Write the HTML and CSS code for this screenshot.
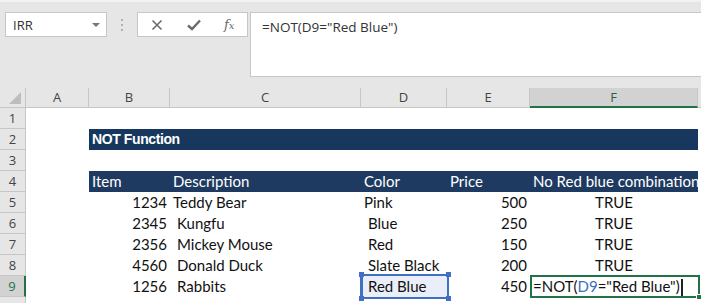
FILE: index.html
```html
<!DOCTYPE html>
<html>
<head>
<meta charset="utf-8">
<link rel="stylesheet" href="styles.css">
</head>
<body>
<div class="app">
  <div class="toolbar">
    <div class="namebox"><span class="name">IRR</span><span class="caret"></span></div>
    <div class="grip"><i></i><i></i><i></i></div>
    <div class="fxbox">
      <svg class="ico" width="12" height="12" viewBox="0 0 12 12"><path d="M1.5 1.5 L10.5 10.5 M10.5 1.5 L1.5 10.5" stroke="#6b6b6b" stroke-width="1.6" fill="none"/></svg>
      <svg class="ico" width="14" height="12" viewBox="0 0 14 12"><path d="M1 6.5 L5 10 L13 1.5" stroke="#6b6b6b" stroke-width="2.4" fill="none"/></svg>
      <span class="fx">f<span class="fxx">x</span></span>
    </div>
    <div class="formula">=NOT(D9="Red Blue")</div>
  </div>

  <div class="sheet">
    <div class="corner"><span class="tri"></span></div>
    <div class="ch">A</div>
    <div class="ch">B</div>
    <div class="ch">C</div>
    <div class="ch">D</div>
    <div class="ch">E</div>
    <div class="ch ch-sel">F</div>
    <div class="ch ch-end"></div>

    <div class="rh">1</div>
    <div class="c"></div><div class="c"></div><div class="c"></div><div class="c"></div><div class="c"></div><div class="c"></div><div class="c"></div>

    <div class="rh">2</div>
    <div class="c"></div>
    <div class="c band title">NOT Function</div>
    <div class="c"></div>

    <div class="rh">3</div>
    <div class="c"></div><div class="c"></div><div class="c"></div><div class="c"></div><div class="c"></div><div class="c"></div><div class="c"></div>

    <div class="rh">4</div>
    <div class="c"></div>
    <div class="c band2">Item</div>
    <div class="c band2">Description</div>
    <div class="c band2">Color</div>
    <div class="c band2">Price</div>
    <div class="c band2">No Red blue combination</div>
    <div class="c"></div>

    <div class="rh">5</div>
    <div class="c"></div>
    <div class="c num">1234</div>
    <div class="c">Teddy Bear</div>
    <div class="c">Pink</div>
    <div class="c num">500</div>
    <div class="c mid">TRUE</div>
    <div class="c"></div>

    <div class="rh">6</div>
    <div class="c"></div>
    <div class="c num">2345</div>
    <div class="c sp">Kungfu</div>
    <div class="c sp">Blue</div>
    <div class="c num">250</div>
    <div class="c mid">TRUE</div>
    <div class="c"></div>

    <div class="rh">7</div>
    <div class="c"></div>
    <div class="c num">2356</div>
    <div class="c sp">Mickey Mouse</div>
    <div class="c sp">Red</div>
    <div class="c num">150</div>
    <div class="c mid">TRUE</div>
    <div class="c"></div>

    <div class="rh">8</div>
    <div class="c"></div>
    <div class="c num">4560</div>
    <div class="c sp">Donald Duck</div>
    <div class="c sp">Slate Black</div>
    <div class="c num">200</div>
    <div class="c mid">TRUE</div>
    <div class="c"></div>

    <div class="rh rh-sel">9</div>
    <div class="c"></div>
    <div class="c num">1256</div>
    <div class="c sp">Rabbits</div>
    <div class="c sp refcell">
      <span class="refbox"><i class="h h1"></i><i class="h h2"></i><i class="h h3"></i><i class="h h4"></i></span>
      <span class="reftext">Red Blue</span>
    </div>
    <div class="c num">450</div>
    <div class="c edit">
      <span class="editbox"><i class="fill"></i></span>
      <span class="etext">=NOT(<span class="refc">D9</span>="Red Blue")<i class="caretline"></i></span>
    </div>
    <div class="c"></div>

    <div class="rh"></div>
    <div class="c"></div><div class="c"></div><div class="c"></div><div class="c"></div><div class="c"></div><div class="c"></div><div class="c"></div>
  </div>
</div>
</body>
</html>
```

FILE: styles.css
```css
* { box-sizing: border-box; }
html, body { margin: 0; padding: 0; }
body {
  width: 701px;
  height: 303px;
  overflow: hidden;
  background: #e6e6e6;
  font-family: "Lato", "Open Sans", sans-serif;
}
.app { display: flex; flex-direction: column; }

.toolbar {
  display: flex;
  align-items: flex-start;
  padding: 12px 0 0 5px;
  height: 88px;
  border-top: 2px solid #f2f2f2;
  padding-top: 10px;
}
.namebox {
  width: 102px;
  height: 25px;
  background: #fff;
  border: 1px solid #c6c6c6;
  display: flex;
  align-items: center;
  justify-content: space-between;
  padding: 0 6px 0 7px;
}
.name { font-family: "Open Sans", sans-serif; font-size: 13px; color: #333; }
.caret {
  width: 0; height: 0;
  border-left: 4px solid transparent;
  border-right: 4px solid transparent;
  border-top: 4px solid #777;
}
.grip {
  width: 30px;
  height: 25px;
  display: flex;
  flex-direction: column;
  align-items: center;
  justify-content: center;
  gap: 3px;
}
.grip i { display: block; width: 2px; height: 2px; background: #b0b0b0; }
.fxbox {
  width: 111px;
  height: 25px;
  background: #fff;
  border: 1px solid #c6c6c6;
  margin-right: 2px;
  display: flex;
  align-items: center;
  padding-left: 13px;
  gap: 24px;
}
.fxbox .ico:nth-child(2) { margin-left: 0; }
.fx {
  font-family: "DejaVu Serif", "Liberation Serif", serif;
  font-style: italic;
  font-size: 13px;
  color: #6b6b6b;
  margin-left: -1px;
}
.fxx { font-size: 10px; }
.formula {
  flex: 1;
  height: 65px;
  background: #fff;
  border: 1px solid #c6c6c6;
  border-right: none;
  padding: 5px 0 0 11px;
  font-family: "Open Sans", sans-serif;
  font-size: 13.5px;
  color: #333;
}

.sheet {
  display: grid;
  grid-template-columns: 26px 63px 81px 191px 86px 83px 168px 3px;
  grid-template-rows: 20px repeat(9, 21px) 10px;
  background: #fff;
  font-size: 15px;
  color: #111;
}
.corner {
  background: #e6e6e6;
  border-right: 1px solid #c6c6c6;
  border-bottom: 1px solid #c6c6c6;
  position: relative;
}
.tri {
  position: absolute;
  right: 4px;
  bottom: 3px;
  width: 0; height: 0;
  border-left: 12px solid transparent;
  border-bottom: 12px solid #bdbdbd;
}
.ch {
  background: #e6e6e6;
  border-right: 1px solid #c6c6c6;
  border-bottom: 1px solid #c6c6c6;
  text-align: center;
  font-size: 13px;
  line-height: 19px;
  color: #444;
  font-family: "Open Sans", sans-serif;
}
.ch-sel {
  background: #d2d2d2;
  color: #2f5d44;
  border-bottom: 2px solid #217346;
}
.ch-end { border-right: none; }
.rh {
  background: #e6e6e6;
  border-right: 1px solid #c6c6c6;
  border-bottom: 1px solid #c6c6c6;
  text-align: center;
  font-size: 13px;
  line-height: 20px;
  color: #444;
  font-family: "Open Sans", sans-serif;
}
.rh-sel {
  background: #d2d2d2;
  color: #217346;
  border-right: 2px solid #217346;
}
.c {
  line-height: 21px;
  padding: 0 3px;
  white-space: nowrap;
  overflow: visible;
}
.num { text-align: right; padding-right: 3px; }
.mid { text-align: center; }
.sp { padding-left: 7px; }
.band {
  background: #17375e;
  color: #fff;
}
.title {
  grid-column: span 5;
  font-family: "Liberation Sans", Arial, sans-serif;
  font-weight: bold;
  font-size: 14px;
  letter-spacing: -0.4px;
}
.band2 {
  background: #1f3a60;
  color: #fff;
}
.refcell { position: relative; }
.refbox {
  position: absolute;
  left: -1px; right: -2px; top: -2px; bottom: -2px;
  border: 2px solid #3f70c5;
  border-left-width: 3px;
  background: #e9eef8;
}
.h {
  position: absolute;
  width: 5px; height: 5px;
  background: #3f70c5;
}
.h1 { left: -4px; top: -4px; }
.h2 { right: -4px; top: -4px; }
.h3 { left: -4px; bottom: -4px; }
.h4 { right: -4px; bottom: -4px; }
.reftext { position: relative; }
.edit { position: relative; }
.editbox {
  position: absolute;
  left: 0; right: -2px; top: -1px; bottom: -1px;
  border: 2px solid #217346;
}
.fill {
  position: absolute;
  right: -4px; bottom: -4px;
  width: 6px; height: 6px;
  background: #217346;
  border: 1px solid #fff;
}
.etext { position: relative; }
.refc { color: #3b6fc4; }
.caretline {
  display: inline-block;
  width: 2px;
  height: 17px;
  background: #222;
  vertical-align: -4px;
  margin-left: 1px;
}
```
